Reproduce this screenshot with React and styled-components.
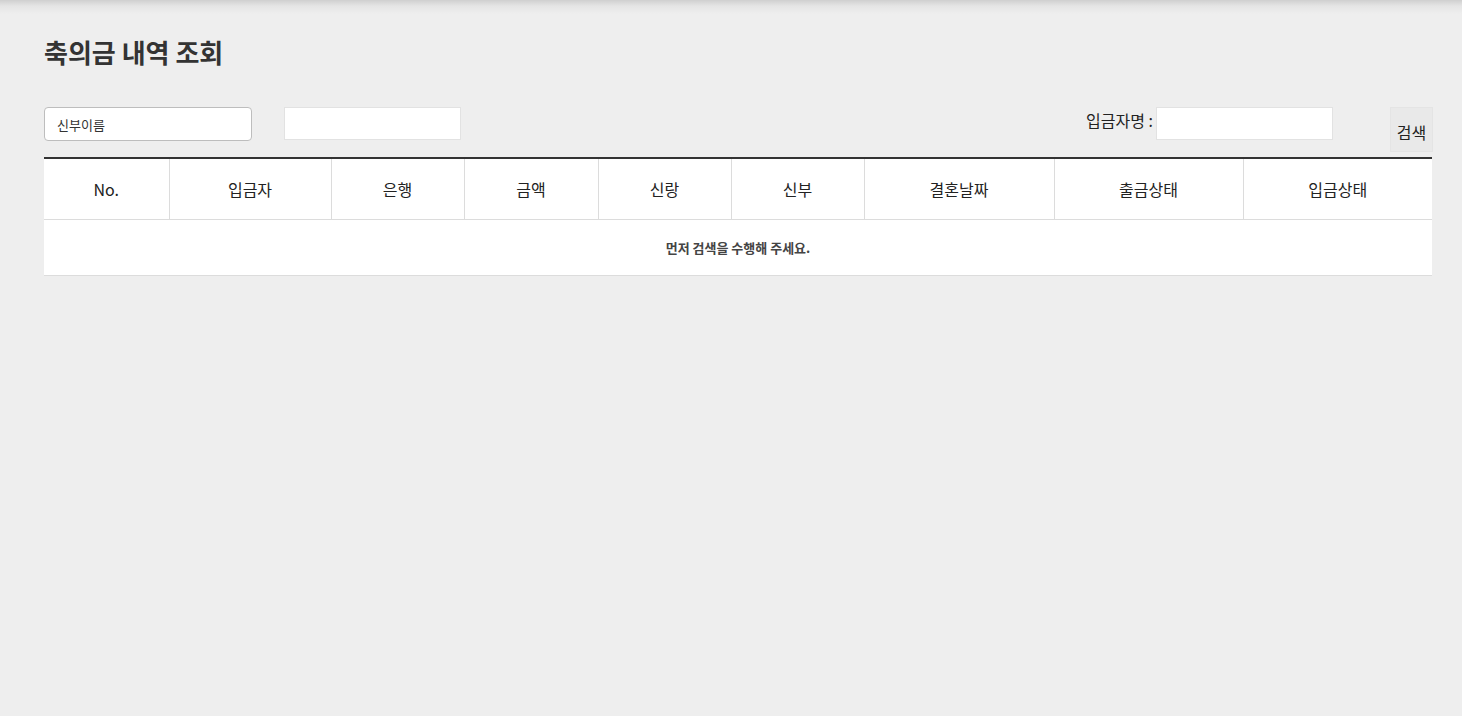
import styled, { createGlobalStyle } from "styled-components";

const GlobalStyle = createGlobalStyle`
  html, body {
    margin: 0;
    padding: 0;
    background: #eeeeee;
    font-family: "Noto Sans CJK KR", "Noto Sans", sans-serif;
    color: #222;
  }
`;

const Page = styled.div`
  min-height: 716px;
  box-sizing: border-box;
  padding: 33px 30px 0 44px;
  background: linear-gradient(to bottom, rgba(0, 0, 0, 0.13), rgba(0, 0, 0, 0.04) 6px, rgba(0, 0, 0, 0) 14px) #eeeeee;
`;

const Title = styled.h1`
  margin: 0;
  font-size: 26px;
  line-height: 38px;
  font-weight: 700;
  color: #333;
`;

const FilterRow = styled.div`
  display: flex;
  align-items: flex-start;
  justify-content: space-between;
  margin-top: 36px;
  margin-bottom: 5px;
`;

const Group = styled.div`
  display: flex;
  align-items: flex-start;
  gap: ${(p) => p.$gap || 0}px;
`;

const Select = styled.select`
  box-sizing: border-box;
  width: 208px;
  height: 34px;
  padding: 0 12px;
  border: 1px solid #bdbdbd;
  border-radius: 4px;
  background: #fff;
  font-family: inherit;
  font-size: 13px;
  color: #333;
  appearance: none;
`;

const TextInput = styled.input`
  box-sizing: border-box;
  width: 177px;
  height: 33px;
  border: 1px solid #e2e2e2;
  background: #fff;
  outline: none;
`;

const Label = styled.span`
  font-size: 16px;
  line-height: 26px;
  color: #222;
  margin-right: 3px;
`;

const SearchButton = styled.button`
  box-sizing: border-box;
  width: 43px;
  height: 45px;
  margin-left: 57px;
  margin-right: -1px;
  padding: 4px 0 0;
  border: 1px solid #e4e4e4;
  background: #e9e9e9;
  font-family: inherit;
  font-size: 16px;
  color: #222;
`;

const Table = styled.table`
  width: 1388px;
  border-collapse: collapse;
  table-layout: fixed;
  background: #fff;
  border-top: 2px solid #333;
`;

const Th = styled.th`
  height: 60px;
  padding: 0;
  font-size: 16px;
  font-weight: 400;
  color: #222;
  border-bottom: 1px solid #dcdcdc;
  border-left: 1px solid #dcdcdc;
  &:first-child {
    border-left: none;
  }
`;

const EmptyCell = styled.td`
  height: 55px;
  padding: 0;
  text-align: center;
  font-size: 13px;
  font-weight: 700;
  color: #444;
  border-bottom: 1px solid #dcdcdc;
`;

const columns = [
  ["No.", 125],
  ["입금자", 162],
  ["은행", 133],
  ["금액", 134],
  ["신랑", 133],
  ["신부", 133],
  ["결혼날짜", 190],
  ["출금상태", 189],
  ["입금상태", 189],
];

export default function App() {
  return (
    <>
      <GlobalStyle />
      <Page>
        <Title>축의금 내역 조회</Title>
        <FilterRow>
          <Group $gap={32}>
            <Select defaultValue="bride">
              <option value="bride">신부이름</option>
              <option value="groom">신랑이름</option>
            </Select>
            <TextInput />
          </Group>
          <Group>
            <Label>입금자명 :</Label>
            <TextInput />
            <SearchButton>검색</SearchButton>
          </Group>
        </FilterRow>
        <Table>
          <colgroup>
            {columns.map(([name, w]) => (
              <col key={name} style={{ width: w }} />
            ))}
          </colgroup>
          <thead>
            <tr>
              {columns.map(([name]) => (
                <Th key={name}>{name}</Th>
              ))}
            </tr>
          </thead>
          <tbody>
            <tr>
              <EmptyCell colSpan={columns.length}>먼저 검색을 수행해 주세요.</EmptyCell>
            </tr>
          </tbody>
        </Table>
      </Page>
    </>
  );
}
